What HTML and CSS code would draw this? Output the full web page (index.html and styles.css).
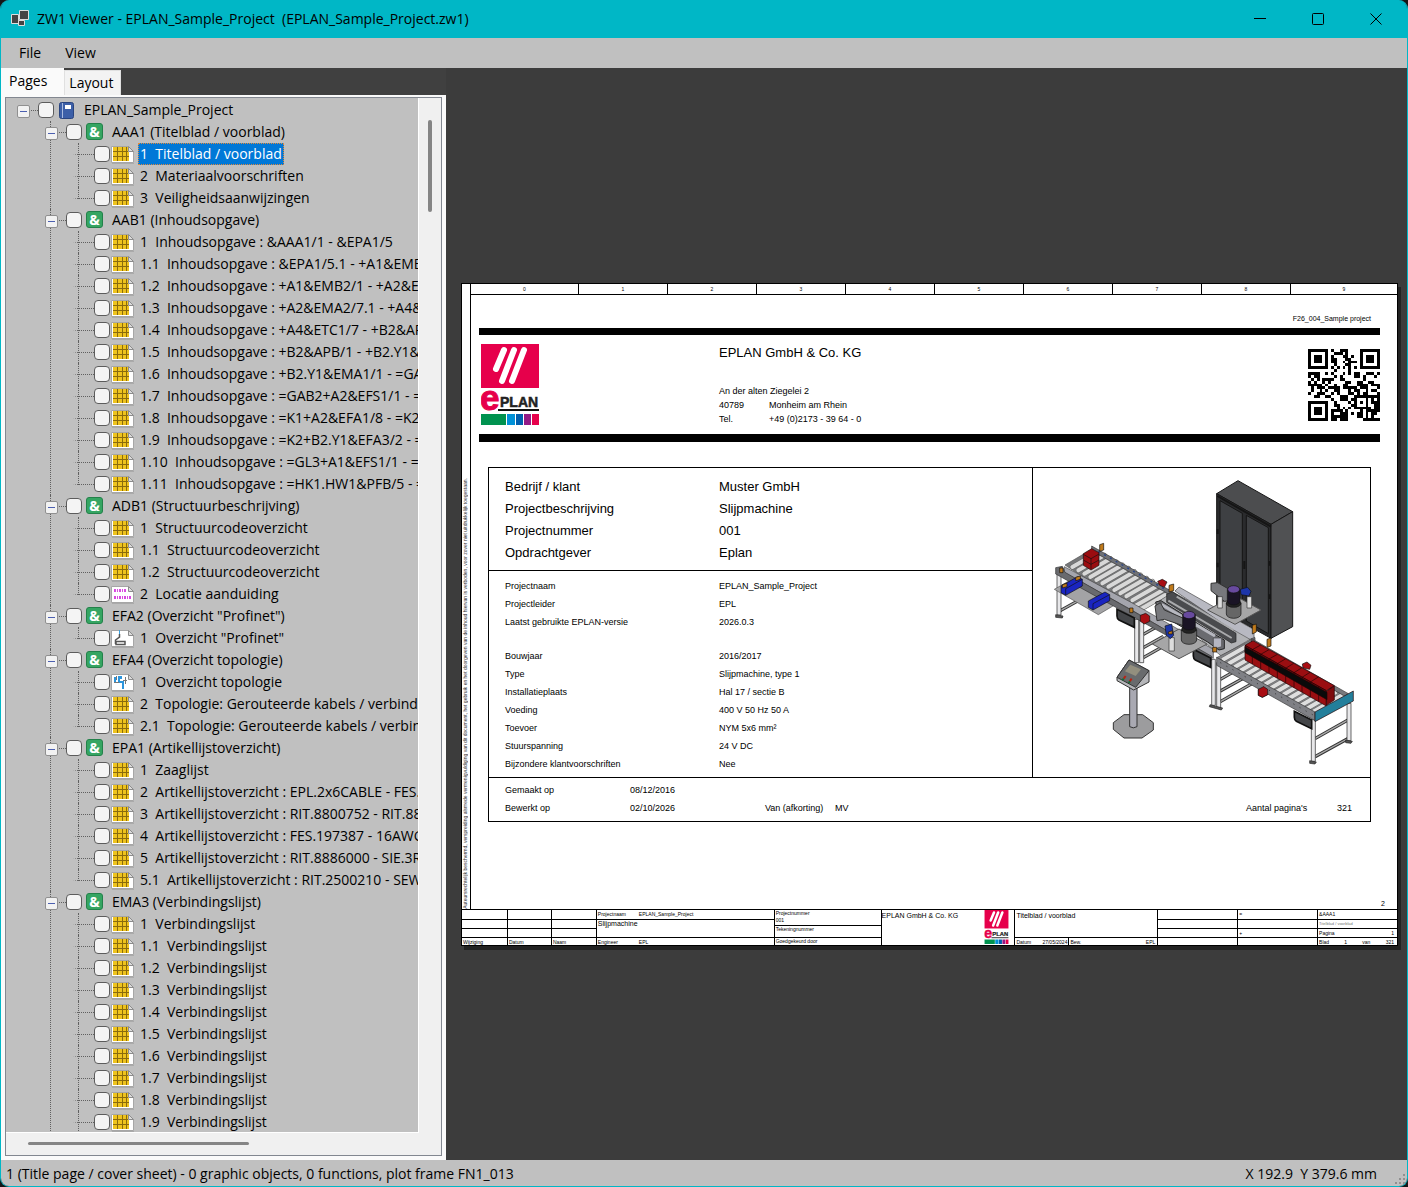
FILE: index.html
```html
<!DOCTYPE html>
<html lang="nl">
<head>
<meta charset="utf-8">
<title>ZW1 Viewer - EPLAN_Sample_Project</title>
<link rel="stylesheet" href="styles.css">
</head>
<body>
<svg class="defs" aria-hidden="true">
  <symbol id="i-book" viewBox="0 0 24 22">
    <rect x="4.500" y="3.500" width="14" height="16" rx="2" fill="#3c5fa8" stroke="#2a4580"/>
    <path d="M7.500 4v15" stroke="#a9bbdf"/><rect x="10" y="6" width="6" height="4" fill="#fff"/>
  </symbol>
  <symbol id="i-amp" viewBox="0 0 24 22">
    <rect x="3.500" y="2.500" width="16" height="16" rx="2.500" fill="#35a562" stroke="#23814a"/>
    <text x="11.500" y="16" text-anchor="middle" font-family="Noto Sans, sans-serif" font-weight="bold" font-size="14" fill="#fff">&amp;</text>
  </symbol>
  <symbol id="i-page" viewBox="0 0 24 22">
    <path d="M.5 3.500h17l5 5v11H.5z" fill="#fff" stroke="#a6a6a6"/>
    <path d="M17.500 3.500v5h5z" fill="#ddd" stroke="#8c8c8c"/><path d="M1 20.500h22" stroke="#aaa"/>
  </symbol>
  <symbol id="i-grid" viewBox="0 0 24 22">
    <use href="#i-page"/><path d="M2 4h15v5h1v9H2z" fill="#eec31e"/>
    <path d="M2 8.500h15M2 13.500h16M6.500 4v14M11.500 4v14M15.500 4v14" stroke="#8a6b0c" fill="none"/>
  </symbol>
  <symbol id="i-loc" viewBox="0 0 24 22">
    <use href="#i-page"/><path d="M3 7.500h13M3 14.500h18" stroke="#d84be0" stroke-width="3" stroke-dasharray="2 1 1 1"/>
  </symbol>
  <symbol id="i-net" viewBox="0 0 24 22">
    <use href="#i-page"/><path d="M8.500 3v4" stroke="#3aa0e0"/><path d="M8.500 7v3L4.500 13v4M5 14.500h9v3H5z" fill="none" stroke="#555" stroke-width="1.500"/>
  </symbol>
  <symbol id="i-topo" viewBox="0 0 24 22">
    <use href="#i-page"/><path d="M4 6v6M8 5v6h4v7M10 5v3" stroke="#2d95dc" stroke-width="2" fill="none"/><path d="M3 11.500h5M12 9.500h4M14.500 6v7M5.500 5v4" stroke="#777" fill="none"/>
  </symbol>
  <symbol id="logo" viewBox="0 0 58 81">
    <rect width="58" height="44" fill="#e6004b"/>
    <path d="M23 6l-8 19M33 6L21 37M43 6L31 37" stroke="#fff" stroke-width="6" stroke-linecap="round"/>
    <text x="-1" y="66" font-family="Liberation Sans, sans-serif" font-weight="bold" font-size="35" fill="#e6004b" stroke="#e6004b">e</text>
    <text x="19" y="63" font-family="Liberation Sans, sans-serif" font-weight="bold" font-size="14" fill="#222" stroke="#222" stroke-width=".5">PLAN</text>
    <path d="M17 66h41" stroke="#111" stroke-width="2"/>
    <path d="M0 70h25v11H0z" fill="#00924f"/><path d="M26 70h8v11h-8z" fill="#0091d8"/><path d="M35 70h7v11h-7z" fill="#005fae"/><path d="M43 70h7v11h-7z" fill="#921a86"/><path d="M51 70h7v11h-7z" fill="#e6004b"/>
  </symbol>
</svg>

<div class="window">
  <header class="titlebar">
    <svg class="app-icon" viewBox="0 0 20 20"><g fill="#444" stroke="#ddd"><path d="M9.500 1.500h9v9h-9z"/><path d="M1.500 5.500h7v9h-7z"/><path d="M8.500 11.500h6v5h-6z"/></g></svg>
    <h1 class="title">ZW1 Viewer - EPLAN_Sample_Project  (EPLAN_Sample_Project.zw1)</h1>
    <button class="caption" aria-label="Minimize"><svg viewBox="0 0 12 12"><path d="M0 5.500h12"/></svg></button>
    <button class="caption" aria-label="Maximize"><svg viewBox="0 0 12 12"><rect x=".5" y=".5" width="11" height="11" rx="1"/></svg></button>
    <button class="caption" aria-label="Close"><svg viewBox="0 0 12 12"><path d="M.5.5l11 11M11.500.5l-11 11"/></svg></button>
  </header>
  <nav class="menubar"><button>File</button><button>View</button></nav>

  <main class="workspace">
    <section class="sidebar">
      <div class="tabs" role="tablist">
        <button class="tab active" role="tab" aria-selected="true">Pages</button><button class="tab" role="tab" aria-selected="false">Layout</button>
      </div>
      <div class="tab-page">
        <div class="tree-box">
          <div class="tree-view">
          <ul class="tree">
            <li><label class="row"><i class="stub open"></i><input type="checkbox"><svg><use href="#i-book"/></svg><span>EPLAN_Sample_Project</span></label>
            <ul>
              <li><label class="row"><i class="stub open"></i><input type="checkbox"><svg><use href="#i-amp"/></svg><span>AAA1 (Titelblad / voorblad)</span></label>
              <ul>
                <li><label class="row selected"><i class="stub"></i><input type="checkbox"><svg><use href="#i-grid"/></svg><span>1  Titelblad / voorblad</span></label></li>
                <li><label class="row"><i class="stub"></i><input type="checkbox"><svg><use href="#i-grid"/></svg><span>2  Materiaalvoorschriften</span></label></li>
                <li><label class="row"><i class="stub"></i><input type="checkbox"><svg><use href="#i-grid"/></svg><span>3  Veiligheidsaanwijzingen</span></label></li>
              </ul></li>
              <li><label class="row"><i class="stub open"></i><input type="checkbox"><svg><use href="#i-amp"/></svg><span>AAB1 (Inhoudsopgave)</span></label>
              <ul>
                <li><label class="row"><i class="stub"></i><input type="checkbox"><svg><use href="#i-grid"/></svg><span>1  Inhoudsopgave : &amp;AAA1/1 - &amp;EPA1/5</span></label></li>
                <li><label class="row"><i class="stub"></i><input type="checkbox"><svg><use href="#i-grid"/></svg><span>1.1  Inhoudsopgave : &amp;EPA1/5.1 - +A1&amp;EMB2/1</span></label></li>
                <li><label class="row"><i class="stub"></i><input type="checkbox"><svg><use href="#i-grid"/></svg><span>1.2  Inhoudsopgave : +A1&amp;EMB2/1 - +A2&amp;EMA2/7</span></label></li>
                <li><label class="row"><i class="stub"></i><input type="checkbox"><svg><use href="#i-grid"/></svg><span>1.3  Inhoudsopgave : +A2&amp;EMA2/7.1 - +A4&amp;ETC1/6</span></label></li>
                <li><label class="row"><i class="stub"></i><input type="checkbox"><svg><use href="#i-grid"/></svg><span>1.4  Inhoudsopgave : +A4&amp;ETC1/7 - +B2&amp;APB/1</span></label></li>
                <li><label class="row"><i class="stub"></i><input type="checkbox"><svg><use href="#i-grid"/></svg><span>1.5  Inhoudsopgave : +B2&amp;APB/1 - +B2.Y1&amp;EMA1</span></label></li>
                <li><label class="row"><i class="stub"></i><input type="checkbox"><svg><use href="#i-grid"/></svg><span>1.6  Inhoudsopgave : +B2.Y1&amp;EMA1/1 - =GAB2</span></label></li>
                <li><label class="row"><i class="stub"></i><input type="checkbox"><svg><use href="#i-grid"/></svg><span>1.7  Inhoudsopgave : =GAB2+A2&amp;EFS1/1 - =K1</span></label></li>
                <li><label class="row"><i class="stub"></i><input type="checkbox"><svg><use href="#i-grid"/></svg><span>1.8  Inhoudsopgave : =K1+A2&amp;EFA1/8 - =K2+B2</span></label></li>
                <li><label class="row"><i class="stub"></i><input type="checkbox"><svg><use href="#i-grid"/></svg><span>1.9  Inhoudsopgave : =K2+B2.Y1&amp;EFA3/2 - =GL3</span></label></li>
                <li><label class="row"><i class="stub"></i><input type="checkbox"><svg><use href="#i-grid"/></svg><span>1.10  Inhoudsopgave : =GL3+A1&amp;EFS1/1 - =HK1</span></label></li>
                <li><label class="row"><i class="stub"></i><input type="checkbox"><svg><use href="#i-grid"/></svg><span>1.11  Inhoudsopgave : =HK1.HW1&amp;PFB/5 - =VN1</span></label></li>
              </ul></li>
              <li><label class="row"><i class="stub open"></i><input type="checkbox"><svg><use href="#i-amp"/></svg><span>ADB1 (Structuurbeschrijving)</span></label>
              <ul>
                <li><label class="row"><i class="stub"></i><input type="checkbox"><svg><use href="#i-grid"/></svg><span>1  Structuurcodeoverzicht</span></label></li>
                <li><label class="row"><i class="stub"></i><input type="checkbox"><svg><use href="#i-grid"/></svg><span>1.1  Structuurcodeoverzicht</span></label></li>
                <li><label class="row"><i class="stub"></i><input type="checkbox"><svg><use href="#i-grid"/></svg><span>1.2  Structuurcodeoverzicht</span></label></li>
                <li><label class="row"><i class="stub"></i><input type="checkbox"><svg><use href="#i-loc"/></svg><span>2  Locatie aanduiding</span></label></li>
              </ul></li>
              <li><label class="row"><i class="stub open"></i><input type="checkbox"><svg><use href="#i-amp"/></svg><span>EFA2 (Overzicht "Profinet")</span></label>
              <ul>
                <li><label class="row"><i class="stub"></i><input type="checkbox"><svg><use href="#i-net"/></svg><span>1  Overzicht "Profinet"</span></label></li>
              </ul></li>
              <li><label class="row"><i class="stub open"></i><input type="checkbox"><svg><use href="#i-amp"/></svg><span>EFA4 (Overzicht topologie)</span></label>
              <ul>
                <li><label class="row"><i class="stub"></i><input type="checkbox"><svg><use href="#i-topo"/></svg><span>1  Overzicht topologie</span></label></li>
                <li><label class="row"><i class="stub"></i><input type="checkbox"><svg><use href="#i-grid"/></svg><span>2  Topologie: Gerouteerde kabels / verbindingen</span></label></li>
                <li><label class="row"><i class="stub"></i><input type="checkbox"><svg><use href="#i-grid"/></svg><span>2.1  Topologie: Gerouteerde kabels / verbindingen</span></label></li>
              </ul></li>
              <li><label class="row"><i class="stub open"></i><input type="checkbox"><svg><use href="#i-amp"/></svg><span>EPA1 (Artikellijstoverzicht)</span></label>
              <ul>
                <li><label class="row"><i class="stub"></i><input type="checkbox"><svg><use href="#i-grid"/></svg><span>1  Zaaglijst</span></label></li>
                <li><label class="row"><i class="stub"></i><input type="checkbox"><svg><use href="#i-grid"/></svg><span>2  Artikellijstoverzicht : EPL.2x6CABLE - FES.197387</span></label></li>
                <li><label class="row"><i class="stub"></i><input type="checkbox"><svg><use href="#i-grid"/></svg><span>3  Artikellijstoverzicht : RIT.8800752 - RIT.8886000</span></label></li>
                <li><label class="row"><i class="stub"></i><input type="checkbox"><svg><use href="#i-grid"/></svg><span>4  Artikellijstoverzicht : FES.197387 - 16AWG</span></label></li>
                <li><label class="row"><i class="stub"></i><input type="checkbox"><svg><use href="#i-grid"/></svg><span>5  Artikellijstoverzicht : RIT.8886000 - SIE.3RT</span></label></li>
                <li><label class="row"><i class="stub"></i><input type="checkbox"><svg><use href="#i-grid"/></svg><span>5.1  Artikellijstoverzicht : RIT.2500210 - SEW.DRE</span></label></li>
              </ul></li>
              <li><label class="row"><i class="stub open"></i><input type="checkbox"><svg><use href="#i-amp"/></svg><span>EMA3 (Verbindingslijst)</span></label>
              <ul>
                <li><label class="row"><i class="stub"></i><input type="checkbox"><svg><use href="#i-grid"/></svg><span>1  Verbindingslijst</span></label></li>
                <li><label class="row"><i class="stub"></i><input type="checkbox"><svg><use href="#i-grid"/></svg><span>1.1  Verbindingslijst</span></label></li>
                <li><label class="row"><i class="stub"></i><input type="checkbox"><svg><use href="#i-grid"/></svg><span>1.2  Verbindingslijst</span></label></li>
                <li><label class="row"><i class="stub"></i><input type="checkbox"><svg><use href="#i-grid"/></svg><span>1.3  Verbindingslijst</span></label></li>
                <li><label class="row"><i class="stub"></i><input type="checkbox"><svg><use href="#i-grid"/></svg><span>1.4  Verbindingslijst</span></label></li>
                <li><label class="row"><i class="stub"></i><input type="checkbox"><svg><use href="#i-grid"/></svg><span>1.5  Verbindingslijst</span></label></li>
                <li><label class="row"><i class="stub"></i><input type="checkbox"><svg><use href="#i-grid"/></svg><span>1.6  Verbindingslijst</span></label></li>
                <li><label class="row"><i class="stub"></i><input type="checkbox"><svg><use href="#i-grid"/></svg><span>1.7  Verbindingslijst</span></label></li>
                <li><label class="row"><i class="stub"></i><input type="checkbox"><svg><use href="#i-grid"/></svg><span>1.8  Verbindingslijst</span></label></li>
                <li class="more"><label class="row"><i class="stub"></i><input type="checkbox"><svg><use href="#i-grid"/></svg><span>1.9  Verbindingslijst</span></label></li>
              </ul></li>
            </ul></li>
          </ul>
          </div>
          <div class="vscroll"><div class="thumb"></div></div>
          <div class="hscroll"><div class="thumb"></div></div>
        </div>
      </div>
    </section>

    <section class="viewer">
      <article class="sheet">
        <div class="side-note"><p>Auteursrechtelijk beschermd, verspreiding alsmede vermenigvuldiging van dit document, het gebruik en het doorgeven van de inhoud hiervan is verboden, voor zover niet uitdrukkelijk toegestaan.</p></div>
        <div class="ruler"><span>0</span><span>1</span><span>2</span><span>3</span><span>4</span><span>5</span><span>6</span><span>7</span><span>8</span><span>9</span></div>
        <div class="sheet-body">
          <p class="form-name">F26_004_Sample project</p>
          <div class="letterhead">
            <svg class="logo" viewBox="0 0 58 81"><use href="#logo"/></svg>
            <address>
              <h2>EPLAN GmbH &amp; Co. KG</h2>
              <dl><dt class="wide">An der alten Ziegelei 2</dt><dt>40789</dt><dd>Monheim am Rhein</dd><dt>Tel.</dt><dd>+49 (0)2173 - 39 64 - 0</dd></dl>
            </address>
            <svg class="qr" viewBox="0 0 25 25" role="img" aria-label="QR code"><path id="qr"/></svg>
          </div>
          <div class="card">
            <div class="specs">
              <dl class="main-specs"><dt>Bedrijf / klant</dt><dd>Muster GmbH</dd><dt>Projectbeschrijving</dt><dd>Slijpmachine</dd><dt>Projectnummer</dt><dd>001</dd><dt>Opdrachtgever</dt><dd>Eplan</dd></dl>
              <dl class="more-specs"><dt>Projectnaam</dt><dd>EPLAN_Sample_Project</dd><dt>Projectleider</dt><dd>EPL</dd><dt>Laatst gebruikte EPLAN-versie</dt><dd>2026.0.3</dd><dt></dt><dd></dd><dt>Bouwjaar</dt><dd>2016/2017</dd><dt>Type</dt><dd>Slijpmachine, type 1</dd><dt>Installatieplaats</dt><dd>Hal 17 / sectie B</dd><dt>Voeding</dt><dd>400 V 50 Hz 50 A</dd><dt>Toevoer</dt><dd>NYM 5x6 mm²</dd><dt>Stuurspanning</dt><dd>24 V DC</dd><dt>Bijzondere klantvoorschriften</dt><dd>Nee</dd></dl>
            </div>
            <div class="picture">
<svg viewBox="-6 6 1011 927" role="img" aria-label="Slijpmachine">
  <defs>
    <path id="rollA" d="M112 303l78-44M130 313l78-45M148 323l78-45M166 333l78-45M184 342l78-45M202 352l78-45M220 362l78-45M238 372l78-45M256 382l78-45M274 391l78-45M292 403l78-45M300 420l84-48M306 436l84-49"/>
    <path id="rollB" d="M562 582l74-42M580 593l78-45M598 604l78-45M616 614l78-45M634 625l78-45M652 635l78-45M670 646l78-45M688 656l78-45M706 667l78-45M724 677l78-45M742 688l78-45M760 698l78-45M778 709l78-45M796 719l84-48M814 729l90-52M832 739l90-52"/>
  </defs>
  <g stroke="#151515" stroke-width="3" stroke-linejoin="round">
    <path d="M545 83l64-39 164 93-65 38z" fill="#4c4d4f"/>
    <path d="M545 83l163 92v342l-163-90z" fill="#2a2b2d"/>
    <path d="M708 175l65-38v345l-65 35z" fill="#505153"/>
    <path d="M555 104l67 38v322l-67-38zM634 148l66 37v318l-66-38z" fill="#3e4043"/>
    <path d="M547 90l161 92M548 190v14M548 290v14M704 285v14M704 385v14M628 285v24" stroke-width="6"/>
  </g>
  <!-- frames below the belts -->
  <g fill="none" stroke="#333" stroke-width="10"><path d="M76 434l54-30M325 505l60-34M325 545l60-34M325 575l65-37M556 640l58-33M556 675l90-50M556 707l95-54M840 818l102-58M840 872l102-56"/></g>
  <g fill="none" stroke="#aaa" stroke-width="4"><path d="M76 434l54-30M325 505l60-34M325 545l60-34M325 575l65-37M556 640l58-33M556 675l90-50M556 707l95-54M840 818l102-58M840 872l102-56"/></g>
  <g fill="#e8e8ea" stroke="#222" stroke-width="2">
    <path d="M66 325h12v122H66zM299 460h12v130h-12zM314 460h12v130h-12zM530 580h11v138h-11zM545 590h12v135h-12zM936 712h12v112h-12zM829 760h12v126h-12z"/>
    <path d="M62 446l22 4-2 6-20-2zM525 716l38 10-4 6-36-10zM824 884l20 4-4 6-16-2zM932 822l20 4-4 6-16-2z" fill="#555"/>
  </g>
  <g stroke="#555" stroke-width="2">
    <path d="M58 370l66-38 130 76-64 38z" fill="#a3a3a5"/>
    <path d="M90 297l85-50 222 130-105 56z" fill="#77787a"/>
  </g>
  <use href="#rollA" stroke="#666" stroke-width="15" stroke-linecap="round"/><use href="#rollA" stroke="#d8d8d8" stroke-width="12" stroke-linecap="round"/>
  <path d="M170 240l380 215 110 60v14L420 395 170 254z" fill="#6f7176" stroke="#333" stroke-width="2"/>
  <path d="M190 256l200 114" stroke="#27448c" stroke-width="4" stroke-dasharray="6 14"/>
  <path d="M420 375l12-12 225 128v24l-20 8z" fill="#b8b9c2" stroke="#444" stroke-width="2"/>
  <path d="M365 410l40-26 240 136-86 50z" fill="#b2b3b6" stroke="#555" stroke-width="2"/>
  <path d="M395 384l18-6 190 124v25l-14 4-194-122z" fill="#4a4b4e" stroke="#222" stroke-width="2"/>
  <path d="M400 404l190 112M425 392l170 100" stroke="#a9aaac" stroke-width="6"/>
  <path d="M88 302l202 108 245 140v27L290 432 88 320z" fill="#a4a5ad" stroke="#444" stroke-width="2"/>
  <path d="M62 305l20-4 8 18 200 114 240 138v12L62 324z" fill="#696a6e" stroke="#333" stroke-width="2"/>
  <path d="M246 430l52 26v28l-46-22q-6-4-6-12zM475 550l52 26v28l-46-22q-6-4-6-12zM778 736l52 26v26l-46-22q-6-4-6-12z" fill="#444649" stroke="#111" stroke-width="5"/>
  <path d="M362 408l16-4 170 106 20 12v26l-16 4-34-24-150-88z" fill="#6a6b70" stroke="#222" stroke-width="3"/>
  <path d="M380 416l160 94" stroke="#b7b8c0" stroke-width="9"/><path d="M535 516h25v26l-25 8z" fill="#b5b6c2" stroke="#444" stroke-width="2"/>
  <path d="M352 534l80-45 84 45-84 44z" fill="#a6a6a7" stroke="#555" stroke-width="3"/>
  <path d="M518 432l80-44 80 44-78 43z" fill="#a6a6a7" stroke="#555" stroke-width="3"/>
  <path d="M528 352l20-2 38 22v32l-18 2-40-32z" fill="#77787c" stroke="#333" stroke-width="3"/>
  <path d="M548 392h14v34h-14zM636 392h14v34h-14zM402 515h16v40h-16z" fill="#ddd" stroke="#333" stroke-width="2"/>
  <path d="M360 420l16-10 12 22 60 26v22l-60-20-22 4z" fill="#77787c" stroke="#333" stroke-width="3"/>
  <g stroke="#111" stroke-width="2">
    <path d="M574 412v32a22 13 0 0 0 44 0v-32z" fill="#666"/><ellipse cx="596" cy="412" rx="22" ry="12" fill="#222"/>
    <path d="M577 370v35a19 12 0 0 0 38 0v-35z" fill="#1a1425"/><ellipse cx="596" cy="370" rx="18" ry="11" fill="#684a9e"/>
    <path d="M439 492v30a23 13 0 0 0 46 0v-30z" fill="#666"/><ellipse cx="462" cy="490" rx="22" ry="12" fill="#222"/>
    <path d="M443 446v34a19 12 0 0 0 38 0v-34z" fill="#1a1425"/><ellipse cx="462" cy="447" rx="18" ry="11" fill="#684a9e"/>
    <path d="M78 360l50-28 14 8v20l-50 28-14-8zM160 405l50-27 14 8v18l-50 28-14-8z" fill="#1a25c0"/><path d="M92 368l50-28M92 368v20M174 413l50-27M174 413v19" fill="none"/>
    <path d="M390 480l20-6 6 34-10 10-12-10zM616 370l22-6 10 12-6 14-24-4z" fill="#1c35a8"/>
    <path d="M145 263l25-15 22 12v38l-24 14-23-14z" fill="#9b0d10"/><path d="M145 265l23 13 24-14M168 278v32M145 282l23 13 24-13" fill="none"/>
    <path d="M316 448l16-6 12 8v16l-16 8-12-8zM368 346l14-6 14 8-8 16-14-6zM670 670l16-8 12 8v16l-16 8-12-6zM802 594l14-6 12 10-4 12-20-4z" fill="#a80d12"/>
    <path d="M194 236l12-4v20l-12 4zM402 358l14-4v20l-14 4zM652 478l12-4v24l-12 6zM696 520l12-4v24l-12 4zM74 306h10v14H74zM284 426h10v14h-10zM533 544h12v14h-12zM575 588h11v14h-11zM82 356l14-4v10l-14 4zM122 334l14-4v10l-14 4zM400 498l12-4v10h-12z" fill="#c07a1b"/>
  </g>
  <!-- outfeed conveyor -->
  <path d="M545 575l100-52 280 160-85 60z" fill="#808184" stroke="#444" stroke-width="2"/>
  <use href="#rollB" stroke="#666" stroke-width="15"/><use href="#rollB" stroke="#dedede" stroke-width="12"/>
  <path d="M650 518l290 165-10 8-280-160z" fill="#77797d" stroke="#333" stroke-width="2"/>
  <path d="M545 574l295 164v26L545 598z" fill="#7f8085" stroke="#333" stroke-width="2"/><path d="M556 590l280 158" stroke="#333" stroke-width="3" stroke-dasharray="3 18"/>
  <path d="M670 670l16-8 12 8v16l-16 8-12-6z" fill="#a80d12" stroke="#111" stroke-width="2"/>
  <g stroke="#230304" stroke-width="2">
    <path d="M630 538l24-14 244 135-24 15zM630 538l244 136v46L630 582z" fill="#9a0e11"/><path d="M874 676l24-16v42l-24 16z" fill="#7d0b0e"/>
    <path d="M652 551l25-14M677 565l25-14M702 579l25-14M727 593l24-14M752 607l24-15M777 620l24-15M801 634l24-15M826 648l24-15M652 551v43M677 565v43M702 579v43M727 593v43M752 607v43M777 620v45M801 634v45M826 648v45M851 661v46" fill="none"/>
    <path d="M630 542l246 137v22L630 560z" fill="#0a0a0a"/>
    <path d="M840 738l115-63v30l-115 62z" fill="#237f9b"/>
  </g>
  <!-- operator panel -->
  <g stroke="#333" stroke-width="3">
    <path d="M235 770l32-24h56l32 24v22l-34 24h-54l-32-26z" fill="#9c9c9e"/><path d="M284 660h22v122q-11 7-22 0z" fill="#a9a9b2"/>
    <path d="M246 634l36-52 60 32v34l-46 24-50-28z" fill="#b5b6b9"/><path d="M246 634l36-52 60 32-40 50z" fill="#696b6d"/>
    <path d="M286 596l32 14-16 20-32-14z" fill="#938f7e" stroke="none"/><path d="M272 630l-6 8M290 638l-6 8" stroke="#b21" stroke-width="6"/><path d="M266 638l-4 5M285 646l-4 5" stroke="#186b35" stroke-width="6"/>
  </g>
</svg>
            </div>
            <div class="dates">
              <span>Gemaakt op</span><span>08/12/2016</span><span></span><span></span><span></span><span></span>
              <span>Bewerkt op</span><span>02/10/2026</span><span>Van (afkorting)</span><span>MV</span><span>Aantal pagina's</span><span>321</span>
            </div>
          </div>
          <p class="next-page">2</p>
        </div>
        <footer class="title-block">
          <div class="cells"><span></span><span></span><span></span><span>Wijziging</span></div>
          <div class="cells"><span></span><span></span><span></span><span>Datum</span></div>
          <div class="cells"><span></span><span></span><span></span><span>Naam</span></div>
          <div class="cells project"><span><b>Projectnaam</b>EPLAN_Sample_Project</span><span class="strong">Slijpmachine</span><span><b>Engineer</b>EPL</span></div>
          <div class="cells numbers"><span>Projectnummer<br>001</span><span>Tekeningnummer</span><span>Goedgekeurd door</span></div>
          <div class="company"><span>EPLAN GmbH &amp; Co. KG</span><svg viewBox="0 0 58 81"><use href="#logo"/></svg></div>
          <div class="cells page-title"><span class="strong">Titelblad / voorblad</span><span class="rev"><i>Datum</i><i>27/05/2024</i><i class="split">Bew.</i><i>EPL</i></span></div>
          <div class="cells"><span></span><span></span><span></span><span></span></div>
          <div class="cells"><span>=</span><span></span><span>+</span><span></span></div>
          <div class="cells"><span>&amp;AAA1</span><span class="faint">Titelblad / voorblad</span><span class="spread"><i>Pagina</i><i>1</i></span><span class="spread"><i>Blad</i><i>1</i><i>van</i><i>321</i></span></div>
        </footer>
      </article>
    </section>
  </main>

  <footer class="statusbar"><span>1 (Title page / cover sheet) - 0 graphic objects, 0 functions, plot frame FN1_013</span><span>X 192.9  Y 379.6 mm</span>
    <svg class="grip" viewBox="0 0 12 12"><path d="M9 1h2v2H9zM9 5h2v2H9zM9 9h2v2H9zM5 5h2v2H5zM5 9h2v2H5zM1 9h2v2H1z"/></svg></footer>
</div>
<script src="qr.js"></script>
</body>
</html>
```
FILE: styles.css
```css
* { box-sizing: border-box; margin: 0; padding: 0; }
html, body { height: 100%; }
body { background: #161616; font: 14px/22px "Open Sans", "Noto Sans", sans-serif; color: #000; }
button { font: inherit; color: inherit; border: 0; background: none; }
ul { list-style: none; }
i, address { font-style: normal; }
.defs { position: absolute; width: 0; height: 0; }

.window { height: 100vh; display: flex; flex-direction: column; border: 1px solid #00b7c6; border-top: 0; border-radius: 9px; overflow: hidden; background: #3c3c3c; }

.titlebar { height: 38px; flex: none; display: flex; align-items: center; background: #00b7c6; padding: 0 2px 0 9px; }
.app-icon { width: 20px; height: 20px; margin-right: 7px; }
.title { flex: 1; font-size: 14px; font-weight: 400; white-space: pre; }
.caption { width: 58px; height: 38px; display: grid; place-items: center; }
.caption svg { width: 12px; height: 12px; fill: none; stroke: #000; }

.menubar { height: 30px; flex: none; display: flex; background: #c0c0c0; padding-left: 10px; }
.menubar button { padding: 0 8px; margin-right: 8px; }

.workspace { flex: 1; min-height: 0; display: flex; }
.sidebar { width: 445px; flex: none; display: flex; flex-direction: column; background: #404040; }
.tabs { display: flex; align-items: flex-end; height: 27px; }
.tab { height: 25px; padding: 0 7px 0 4px; background: #f3f3f3; border: 1px solid #e0e0e0; border-bottom: 0; }
.tab.active { height: 27px; padding: 0 16px 2px 7px; background: #fafafa; border-color: #fafafa; }
.tab-page { flex: 1; min-height: 0; background: #fafafa; padding: 2px 4px 4px; display: flex; }
.tree-box { flex: 1; min-width: 0; display: grid; grid-template: 1fr 22px / 1fr 22px; border: 1px solid #828790; background: #f0f0f0; }
.tree-view { overflow: hidden; background: #c0c0c0; border-right: 1px solid #fff; border-bottom: 1px solid #fff; padding: 1px 0 0 11px; min-height: 0; }
.vscroll { padding: 22px 9px 0; }
.vscroll .thumb { width: 4px; height: 92px; border-radius: 2px; background: #858585; }
.hscroll { padding: 9px 0 0 22px; }
.hscroll .thumb { width: 221px; height: 3px; border-radius: 2px; background: #858585; }

.tree ul { padding-left: 28px; }
.tree ul li { position: relative; }
.tree ul li::before { content: ""; position: absolute; left: 5px; top: 0; bottom: 0; border-left: 1px dotted #606060; }
.tree ul ul li:last-child:not(.more)::before { bottom: 10px; }
.row { display: flex; align-items: center; height: 22px; white-space: pre; }
.stub { position: relative; flex: none; width: 21px; height: 1px; border-top: 1px dotted #606060; border-left: 5px solid transparent; }
.stub.open::before { content: ""; position: absolute; left: -5px; top: -6px; width: 11px; height: 11px; border: 1px solid #909090; border-radius: 2px; background: linear-gradient(#4b5fb0, #4b5fb0) center / 7px 1px no-repeat, #f2f2f2; }
.row input { appearance: none; flex: none; width: 16px; height: 16px; border: 1px solid #5c5c5c; border-radius: 4px; background: #f4f4f4; }
.row svg { flex: none; width: 24px; height: 22px; margin: 0 3px 0 1px; }
.row span { padding: 0 2px; line-height: 22px; }
.selected span { background: #0078d7; color: #fff; outline: 1px dotted #e08a3c; outline-offset: -1px; }

.viewer { flex: 1; min-width: 0; display: flex; align-items: center; padding: 0 9px 0 15px; }
.sheet { flex: 1; min-width: 0; display: grid; grid-template: 11px 1fr 36px / 9px 1fr; min-height: 663px; background: #fff; border: 1px solid #000; box-shadow: 3px 4px 0 #222; font: 9px/14px "Liberation Sans", Arial, sans-serif; }
.side-note { grid-row: 1 / 3; border-right: 1px solid #000; display: flex; align-items: flex-end; }
.side-note p { writing-mode: vertical-rl; transform: rotate(180deg); font-size: 5px; line-height: 7px; white-space: nowrap; color: #333; }
.ruler { display: grid; grid-template-columns: 107fr repeat(8, 89fr) 107fr; border-bottom: 1px solid #000; font-size: 5px; line-height: 10px; text-align: center; }
.ruler span + span { border-left: 1px solid #000; }
.sheet-body { padding: 17px 17px 0 8px; display: flex; flex-direction: column; }
.form-name { text-align: right; font-size: 7px; padding-right: 9px; }
.letterhead { display: flex; align-items: flex-start; height: 114px; border: solid #000; border-width: 7px 0 8px; margin-top: 2px; padding: 9px 0 0 2px; }
.logo { width: 58px; height: 81px; }
.letterhead address { flex: 1; padding-left: 180px; }
h2 { font-size: 13px; font-weight: 400; line-height: 18px; }
.letterhead dl { display: grid; grid-template-columns: 50px 1fr; padding-top: 22px; }
.letterhead .wide { grid-column: 1 / 3; }
.qr { width: 72px; height: 72px; margin-top: 5px; shape-rendering: crispEdges; }
.card { display: grid; grid-template-columns: 1fr 338px; border: 1px solid #000; margin: 25px 9px 0; }
.specs dl { display: grid; grid-template-columns: 214px 1fr; padding-left: 16px; }
.specs .main-specs { grid-auto-rows: 22px; font-size: 13px; line-height: 22px; padding-top: 8px; height: 103px; border-bottom: 1px solid #000; }
.specs .more-specs { grid-auto-rows: 1fr; line-height: 18px; padding-top: 6px; height: 206px; padding-bottom: 4px; }
.picture { border-left: 1px solid #000; }
.picture svg { display: block; width: 337px; height: 309px; }
.dates { grid-column: 1 / 3; display: grid; grid-template-columns: 125px 135px 70px 1fr 91px 33px; line-height: 18px; border-top: 1px solid #000; padding: 3px 0 4px 16px; }
.next-page { margin: auto -5px 0 0; text-align: right; font-size: 7px; line-height: 10px; }

.title-block { grid-column: 1 / 3; display: grid; grid-template-columns: 45fr 44fr 45fr 178fr 107fr 134fr 143fr 80fr 80fr 80fr; border-top: 1px solid #000; font-size: 5px; line-height: 8px; }
.title-block > * + * { border-left: 1px solid #000; }
.cells { display: grid; grid-template-rows: repeat(4, 1fr); min-width: 0; }
.cells > span { padding-left: 1px; white-space: nowrap; }
.cells > span + span { border-top: 1px solid #000; }
.title-block .strong { font-size: 7px; }
.project { grid-template-rows: 9px 1fr 9px; }
.project b { display: inline-block; width: 41px; font-weight: 400; }
.numbers { grid-template-rows: 15px 1fr 9px; line-height: 7px; }
.company { display: flex; justify-content: space-between; font-size: 7px; line-height: 12px; padding-right: 5px; }
.company svg { width: 25px; height: 34px; }
.page-title { grid-template-rows: 1fr 9px; line-height: 12px; }
.rev { display: grid; grid-template-columns: 26px 26px 1fr auto; line-height: 8px; padding-right: 2px; }
.rev .split { border-left: 1px solid #000; padding-left: 1px; }
.spread { display: flex; justify-content: space-between; padding-right: 3px; }
.faint { color: #777; font-size: 4px; }

.statusbar { height: 26px; flex: none; display: flex; justify-content: space-between; background: #c0c0c0; padding: 3px 30px 0 5px; white-space: pre; position: relative; }
.grip { position: absolute; right: 1px; bottom: 1px; width: 12px; height: 12px; fill: #909090; }
```
FILE: qr.js
```js
// Draws the contact link as a QR code (version 2, level L, byte mode).
function qrPath(text, mask) {
  const size = 25, bits = [];
  const push = (v, n) => { for (let i = n - 1; i >= 0; i--) bits.push((v >> i) & 1); };
  push(4, 4); push(text.length, 8);
  for (const c of text) push(c.charCodeAt(0), 8);
  push(0, Math.min(4, 272 - bits.length));
  while (bits.length % 8) bits.push(0);
  for (let p = 0xec; bits.length < 272; p ^= 0xec ^ 0x11) push(p, 8);

  // Reed-Solomon remainder, ten codewords
  const mul = (x, y) => { let z = 0; for (let i = 7; i >= 0; i--) { z = (z << 1) ^ ((z >> 7) * 0x11d); z ^= ((y >> i) & 1) * x; } return z; };
  const gen = Array(10).fill(0); gen[9] = 1;
  for (let i = 0, root = 1; i < 10; i++, root = mul(root, 2))
    for (let j = 0; j < 10; j++) { gen[j] = mul(gen[j], root); if (j < 9) gen[j] ^= gen[j + 1]; }
  const rem = Array(10).fill(0);
  for (let i = 0; i < 272; i += 8) {
    const f = parseInt(bits.slice(i, i + 8).join(""), 2) ^ rem.shift();
    rem.push(0);
    gen.forEach((g, k) => { rem[k] ^= mul(g, f); });
  }
  rem.forEach(b => push(b, 8));

  // timing, finder and alignment patterns
  const m = Array.from({ length: size }, () => Array(size).fill(null));
  const set = (x, y, v) => { if (x >= 0 && y >= 0 && x < size && y < size) m[y][x] = v ? 1 : 0; };
  for (let i = 0; i < size; i++) { set(6, i, i % 2 === 0); set(i, 6, i % 2 === 0); }
  for (const [cx, cy] of [[3, 3], [21, 3], [3, 21]])
    for (let dy = -4; dy <= 4; dy++) for (let dx = -4; dx <= 4; dx++) {
      const d = Math.max(Math.abs(dx), Math.abs(dy));
      set(cx + dx, cy + dy, d !== 2 && d !== 4);
    }
  for (let dy = -2; dy <= 2; dy++) for (let dx = -2; dx <= 2; dx++)
    set(18 + dx, 18 + dy, Math.max(Math.abs(dx), Math.abs(dy)) !== 1);

  // format bits
  let r = 8 | mask; const data = r;
  for (let i = 0; i < 10; i++) r = (r << 1) ^ ((r >> 9) * 0x537);
  const fmt = ((data << 10) | r) ^ 0x5412, fb = i => (fmt >> i) & 1;
  for (let i = 0; i < 6; i++) set(8, i, fb(i));
  set(8, 7, fb(6)); set(8, 8, fb(7)); set(7, 8, fb(8));
  for (let i = 9; i < 15; i++) set(14 - i, 8, fb(i));
  for (let i = 0; i < 8; i++) set(size - 1 - i, 8, fb(i));
  for (let i = 8; i < 15; i++) set(8, size - 15 + i, fb(i));
  set(8, size - 8, 1);

  let k = 0;
  for (let right = size - 1; right >= 1; right -= 2) {
    if (right === 6) right = 5;
    for (let v = 0; v < size; v++) for (let j = 0; j < 2; j++) {
      const x = right - j, up = ((right + 1) & 2) === 0, y = up ? size - 1 - v : v;
      if (m[y][x] === null) m[y][x] = (bits[k++] || 0) ^ ((x + y) % 3 === 0 ? 1 : 0);
    }
  }
  let d = "";
  m.forEach((row, y) => row.forEach((v, x) => { if (v) d += `M${x} ${y}h1v1h-1z`; }));
  return d;
}
document.getElementById("qr").setAttribute("d", qrPath("https://www.eplan.de/en/start/", 3));
```
